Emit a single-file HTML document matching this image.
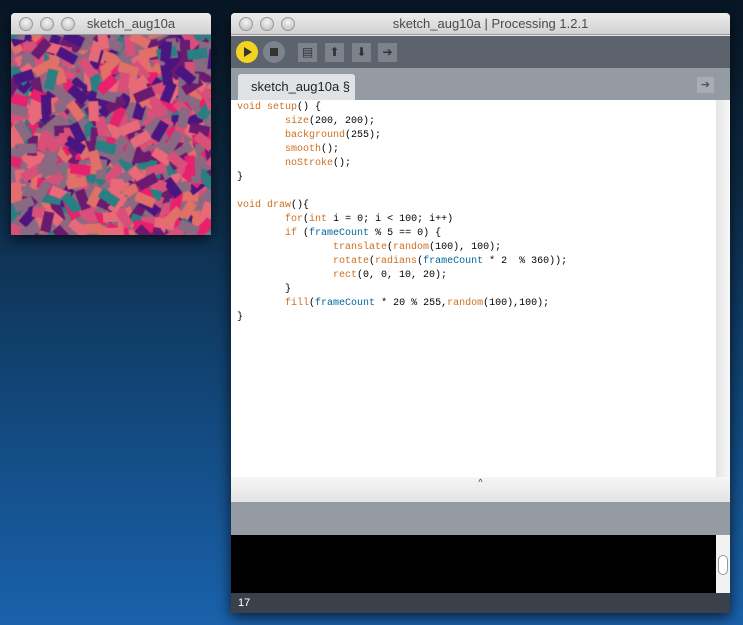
<!DOCTYPE html>
<html><head><meta charset="utf-8"><style>
*{margin:0;padding:0;box-sizing:border-box}
body{width:743px;height:625px;overflow:hidden;position:relative;font-family:"Liberation Sans",sans-serif;
background:linear-gradient(180deg,#081624 0%,#0d2a44 30%,#12477a 65%,#1a62ac 100%);}
.win{position:absolute;background:#fff;box-shadow:0 4px 14px rgba(0,0,0,.7);border-radius:4px 4px 0 0;overflow:hidden}
.tb{height:22px;background:linear-gradient(#ececec,#d2d2d2);border-bottom:1px solid #999;position:relative;font-size:13px;color:#4a4a4a;text-align:center;line-height:22px}
.lights{position:absolute;left:8px;top:4px;display:flex;gap:7px}
.lights i{width:14px;height:14px;border-radius:50%;background:radial-gradient(circle at 50% 35%,#f4f4f4,#b8b8b8);border:1px solid #999;display:block}
pre{font-family:"Liberation Mono",monospace;font-size:10px;line-height:14px;color:#000;padding-top:1px}
.k{color:#cc7020}.b{color:#006699}
.btn{position:absolute;top:7px;width:19px;height:19px;background:#7d838c;}
</style></head><body>
<div class="win" style="left:11px;top:13px;width:200px;height:222px">
 <div class="tb"><div class="lights"><i></i><i></i><i></i></div><span style="margin-left:40px">sketch_aug10a</span></div>
 <canvas id="c" width="200" height="200" style="display:block"></canvas>
</div>
<div class="win" style="left:231px;top:13px;width:499px;height:600px;background:#e8e8e8">
 <div class="tb"><div class="lights"><i></i><i></i><i></i></div><span style="margin-left:20px">sketch_aug10a | Processing 1.2.1</span></div>
 <div style="position:absolute;top:23px;left:0;width:499px;height:32px;background:#5d636c">
  <div style="position:absolute;left:5px;top:5px;width:22px;height:22px;border-radius:50%;background:#f3d321"><div style="position:absolute;left:8px;top:6px;border-left:8px solid #333;border-top:5px solid transparent;border-bottom:5px solid transparent"></div></div>
  <div style="position:absolute;left:32px;top:5px;width:22px;height:22px;border-radius:50%;background:#7d838c"><div style="position:absolute;left:7px;top:7px;width:8px;height:8px;background:#333"></div></div>
  <div class="btn" style="left:67px;color:#333;font-size:12px;text-align:center;line-height:19px">▤</div>
  <div class="btn" style="left:94px;color:#333;font-size:12px;text-align:center;line-height:19px">⬆</div>
  <div class="btn" style="left:121px;color:#333;font-size:12px;text-align:center;line-height:19px">⬇</div>
  <div class="btn" style="left:147px;color:#333;font-size:12px;text-align:center;line-height:19px">➔</div>
 </div>
 <div style="position:absolute;top:55px;left:0;width:499px;height:32px;background:#959ba3">
  <div style="position:absolute;left:7px;top:6px;width:117px;height:26px;background:#e0e3e6;border-radius:3px 3px 0 0;font-size:13px;color:#222;line-height:26px;padding-left:13px">sketch_aug10a §</div>
  <div style="position:absolute;left:466px;top:9px;width:17px;height:16px;background:#a8adb4;color:#555;font-size:11px;text-align:center;line-height:16px">➔</div>
 </div>
 <div style="position:absolute;top:87px;left:0;width:485px;height:377px;background:#fff;padding:0 0 0 6px">
<pre>
<span class="k">void</span> <span class="k">setup</span>() {
        <span class="k">size</span>(200, 200);
        <span class="k">background</span>(255);
        <span class="k">smooth</span>();
        <span class="k">noStroke</span>();
}

<span class="k">void</span> <span class="k">draw</span>(){
        <span class="k">for</span>(<span class="k">int</span> i = 0; i &lt; 100; i++)
        <span class="k">if</span> (<span class="b">frameCount</span> % 5 == 0) {
                <span class="k">translate</span>(<span class="k">random</span>(100), 100);
                <span class="k">rotate</span>(<span class="k">radians</span>(<span class="b">frameCount</span> * 2  % 360));
                <span class="k">rect</span>(0, 0, 10, 20);
        }
        <span class="k">fill</span>(<span class="b">frameCount</span> * 20 % 255,<span class="k">random</span>(100),100);
}</pre></div>
 <div style="position:absolute;top:87px;left:485px;width:14px;height:377px;background:linear-gradient(90deg,#e4e4e4,#f8f8f8)"></div>
 <div style="position:absolute;top:464px;left:0;width:499px;height:25px;background:linear-gradient(#f6f6f6,#e4e4e4);text-align:center;font-size:9px;color:#333">^</div>
 <div style="position:absolute;top:489px;left:0;width:499px;height:33px;background:#959ba3"></div>
 <div style="position:absolute;top:522px;left:0;width:485px;height:58px;background:#000"></div>
 <div style="position:absolute;top:522px;left:485px;width:14px;height:58px;background:#f2f2f2"><div style="margin:20px 2px 0;height:20px;border:1px solid #999;border-radius:5px;background:#fff"></div></div>
 <div style="position:absolute;top:580px;left:0;width:499px;height:20px;background:#3b414a;color:#fff;font-size:11px;line-height:20px;padding-left:7px">17</div>
</div>
<script>
var c=document.getElementById('c').getContext('2d');
c.fillStyle='#8a6a80';c.fillRect(0,0,200,200);
var s=7;function r(){s=(s*16807)%2147483647;return s/2147483647;}
var cols=['#e8206e','#e86a78','#2a7f82','#4a1580','#8a6a82','#8a6a82','#d8507a','#6a1a70','#e07068'];
for(var i=0;i<600;i++){c.save();c.translate(r()*210-5,r()*210-5);c.rotate(r()*6.28);c.fillStyle=cols[Math.floor(r()*cols.length)];c.fillRect(0,0,10,20);c.restore();}
</script>
</body></html>
